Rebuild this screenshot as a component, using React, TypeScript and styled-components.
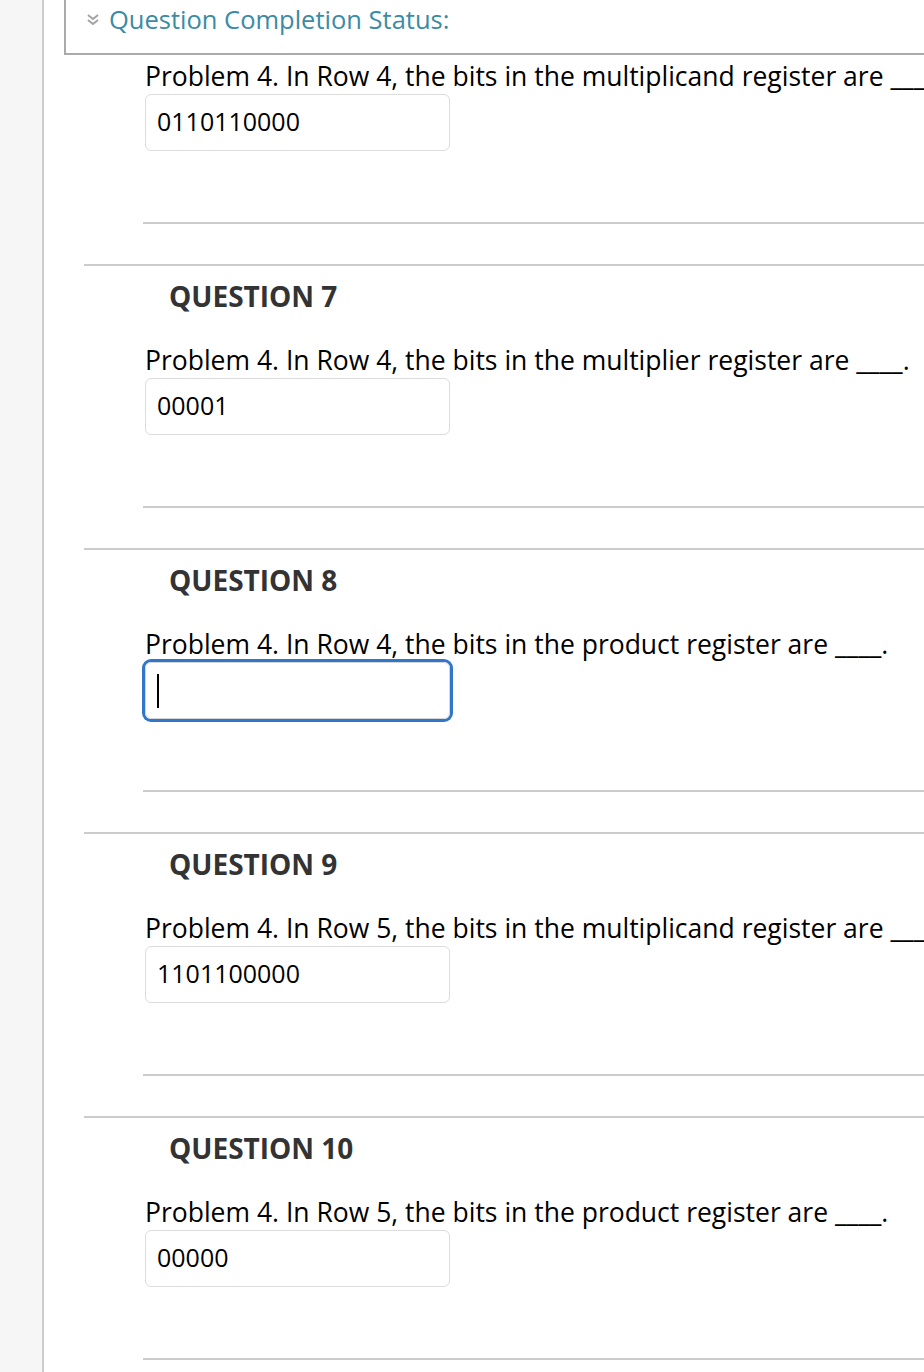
import styled, { createGlobalStyle, css } from "styled-components";

const GlobalStyle = createGlobalStyle`
  html, body {
    margin: 0;
    padding: 0;
    background: #fff;
    overflow: hidden;
  }

  body {
    font-family: "Open Sans", "Liberation Sans", sans-serif;
    color: #000;
  }
`;

const Page = styled.div`
  display: flex;
  width: 100%;
  height: 1372px;
  overflow: hidden;
`;

const Sidebar = styled.aside`
  flex: 0 0 42px;
  background: #f6f6f6;
  border-right: 2px solid #cdcdcd;
`;

const Main = styled.main`
  flex: 1;
  min-width: 0;
  padding-left: 20px;
  overflow: hidden;
  white-space: nowrap;
`;

const StatusBox = styled.div`
  display: flex;
  align-items: flex-start;
  gap: 9px;
  height: 50px;
  padding: 3px 0 0 20px;
  border-left: 2px solid #aaaaaa;
  border-bottom: 2px solid #aaaaaa;
`;

const Chevron = styled.svg`
  width: 14px;
  height: 32px;
  flex-shrink: 0;
`;

const StatusLink = styled.span`
  font-size: 25.5px;
  line-height: 32px;
  color: #3b8ba5;
`;

const Questions = styled.div`
  padding-left: 20px;
`;

const Question = styled.section`
  border-top: 2px solid #cccccc;
  padding-top: 15px;
`;

const Title = styled.h2`
  margin: 0 0 33px 85px;
  font-size: 28px;
  line-height: 30px;
  font-weight: 700;
  color: #333;
`;

const Body = styled.div<{ $first?: boolean }>`
  margin-left: 60px;
  padding-top: ${(p) => (p.$first ? "5px" : "0")};
  padding-bottom: 40px;
`;

const Prompt = styled.p`
  margin: 0 0 2px;
  padding-left: 1px;
  font-size: 26.5px;
  line-height: 32px;
  color: #000;
`;

const AnswerBox = styled.div<{ $focused?: boolean }>`
  display: flex;
  align-items: center;
  box-sizing: border-box;
  width: 305px;
  height: 57px;
  margin-left: 1px;
  padding: 0 11px 3px;
  border: 1px solid #dcdcdc;
  border-radius: 6px;
  font-size: 25px;
  color: #000;

  ${(p) =>
    p.$focused &&
    css`
      padding-bottom: 0;
      box-shadow: 0 0 0 3px #3076ca;
      border-color: #d6d6d6;
    `}
`;

const Caret = styled.span`
  display: block;
  width: 2px;
  height: 34px;
  background: #000;
`;

const Divider = styled.hr`
  margin: 71px 0 0 -1px;
  border: 0;
  border-top: 2px solid #cccccc;
`;

type Item = {
  number?: number;
  prompt: string;
  value: string;
  focused?: boolean;
};

const items: Item[] = [
  {
    prompt: "Problem 4. In Row 4, the bits in the multiplicand register are ____.",
    value: "0110110000",
  },
  {
    number: 7,
    prompt: "Problem 4. In Row 4, the bits in the multiplier register are ____.",
    value: "00001",
  },
  {
    number: 8,
    prompt: "Problem 4. In Row 4, the bits in the product register are ____.",
    value: "",
    focused: true,
  },
  {
    number: 9,
    prompt: "Problem 4. In Row 5, the bits in the multiplicand register are ____.",
    value: "1101100000",
  },
  {
    number: 10,
    prompt: "Problem 4. In Row 5, the bits in the product register are ____.",
    value: "00000",
  },
];

const QuestionBody = ({ item, first }: { item: Item; first?: boolean }) => (
  <Body $first={first}>
    <Prompt>{item.prompt}</Prompt>
    <AnswerBox $focused={item.focused}>
      {item.focused ? <Caret /> : item.value}
    </AnswerBox>
    <Divider />
  </Body>
);

const App = () => {
  const [lead, ...rest] = items;

  return (
    <Page>
      <GlobalStyle />
      <Sidebar />
      <Main>
        <StatusBox>
          <Chevron viewBox="0 0 14 32">
            <polyline points="2,12 7,16 12,12" fill="none" stroke="#a3a3a3" strokeWidth="2" />
            <polyline points="2,17 7,21 12,17" fill="none" stroke="#a3a3a3" strokeWidth="2" />
          </Chevron>
          <StatusLink>Question Completion Status:</StatusLink>
        </StatusBox>
        <Questions>
          <QuestionBody item={lead} first />
          {rest.map((item) => (
            <Question key={item.number}>
              <Title>QUESTION {item.number}</Title>
              <QuestionBody item={item} />
            </Question>
          ))}
        </Questions>
      </Main>
    </Page>
  );
};

export default App;
